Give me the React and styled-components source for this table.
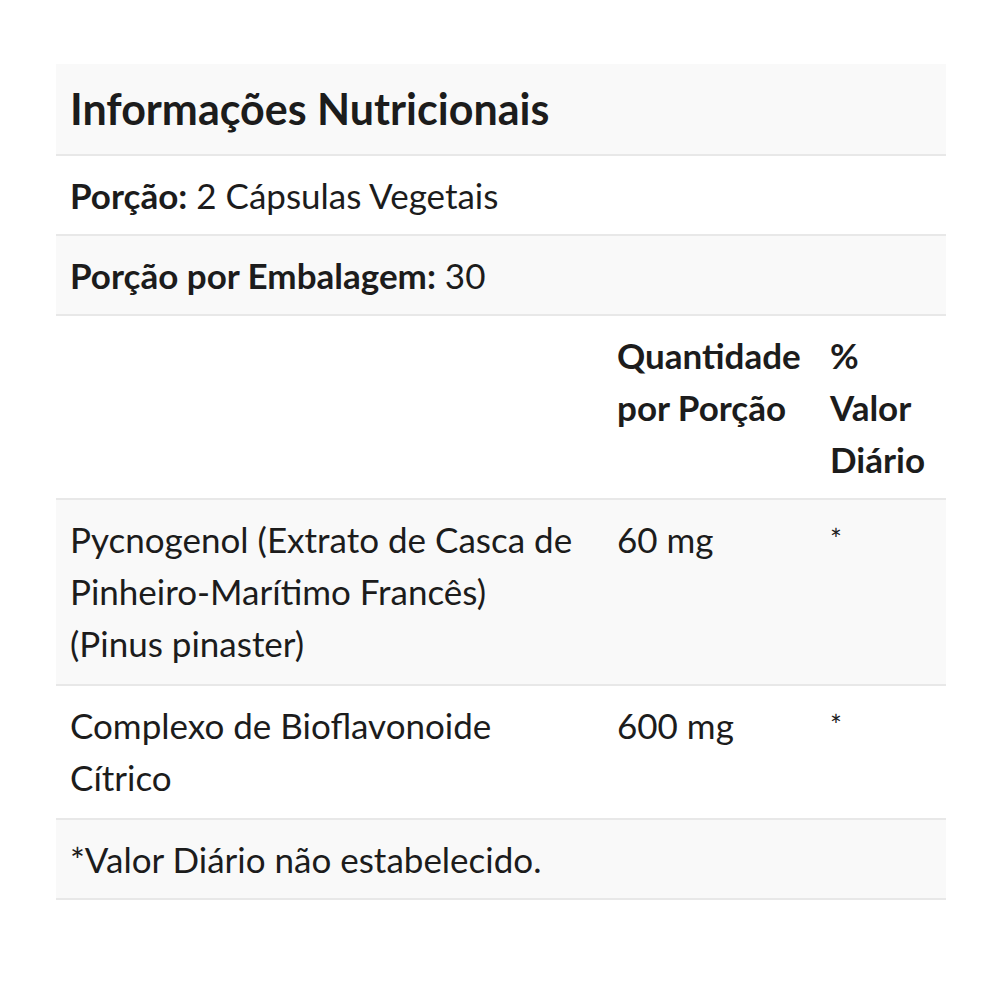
import React from "react";
import styled, { createGlobalStyle } from "styled-components";

const GlobalStyle = createGlobalStyle`
  body {
    margin: 0;
    background: #fff;
    font-family: Lato, "Open Sans", sans-serif;
    color: #1c1c1c;
  }
`;

const Page = styled.div`
  padding: 64px 54px 0 56px;
`;

const Table = styled.div`
  display: grid;
  grid-template-columns: 547px 213px 130px;
  width: 890px;
`;

const Row = styled.div`
  display: contents;
  & > div {
    background: ${(p) => (p.$shade ? "#f9f9f9" : "#fff")};
  }
`;

const Cell = styled.div`
  grid-column: span ${(p) => p.$span || 1};
  padding: 13px 14px;
  font-size: 35px;
  line-height: 52px;
  font-weight: ${(p) => (p.$bold ? 700 : 400)};
  border-bottom: 2px solid #e8e8e8;
`;

const NameCell = styled(Cell)`
  padding-right: 28px;
  padding-bottom: 15px;
`;

const Title = styled(Cell)`
  font-size: 43px;
  font-weight: 700;
  line-height: 64px;
`;

const Star = styled(Cell)`
  font-size: 28px;
`;

const Label = styled.b`
  font-weight: 700;
`;

export default function App() {
  return (
    <>
      <GlobalStyle />
      <Page>
        <Table>
          <Row $shade>
            <Title $span={3}>Informações Nutricionais</Title>
          </Row>
          <Row>
            <Cell $span={3}>
              <Label>Porção:</Label> 2 Cápsulas Vegetais
            </Cell>
          </Row>
          <Row $shade>
            <Cell $span={3}>
              <Label>Porção por Embalagem:</Label> 30
            </Cell>
          </Row>
          <Row>
            <NameCell></NameCell>
            <Cell $bold>Quantidade por Porção</Cell>
            <Cell $bold>% Valor Diário</Cell>
          </Row>
          <Row $shade>
            <NameCell>Pycnogenol (Extrato de Casca de Pinheiro-Marítimo Francês) (Pinus pinaster)</NameCell>
            <Cell>60 mg</Cell>
            <Star>*</Star>
          </Row>
          <Row>
            <NameCell>Complexo de Bioflavonoide Cítrico</NameCell>
            <Cell>600 mg</Cell>
            <Star>*</Star>
          </Row>
          <Row $shade>
            <Cell $span={3}>*Valor Diário não estabelecido.</Cell>
          </Row>
        </Table>
      </Page>
    </>
  );
}
